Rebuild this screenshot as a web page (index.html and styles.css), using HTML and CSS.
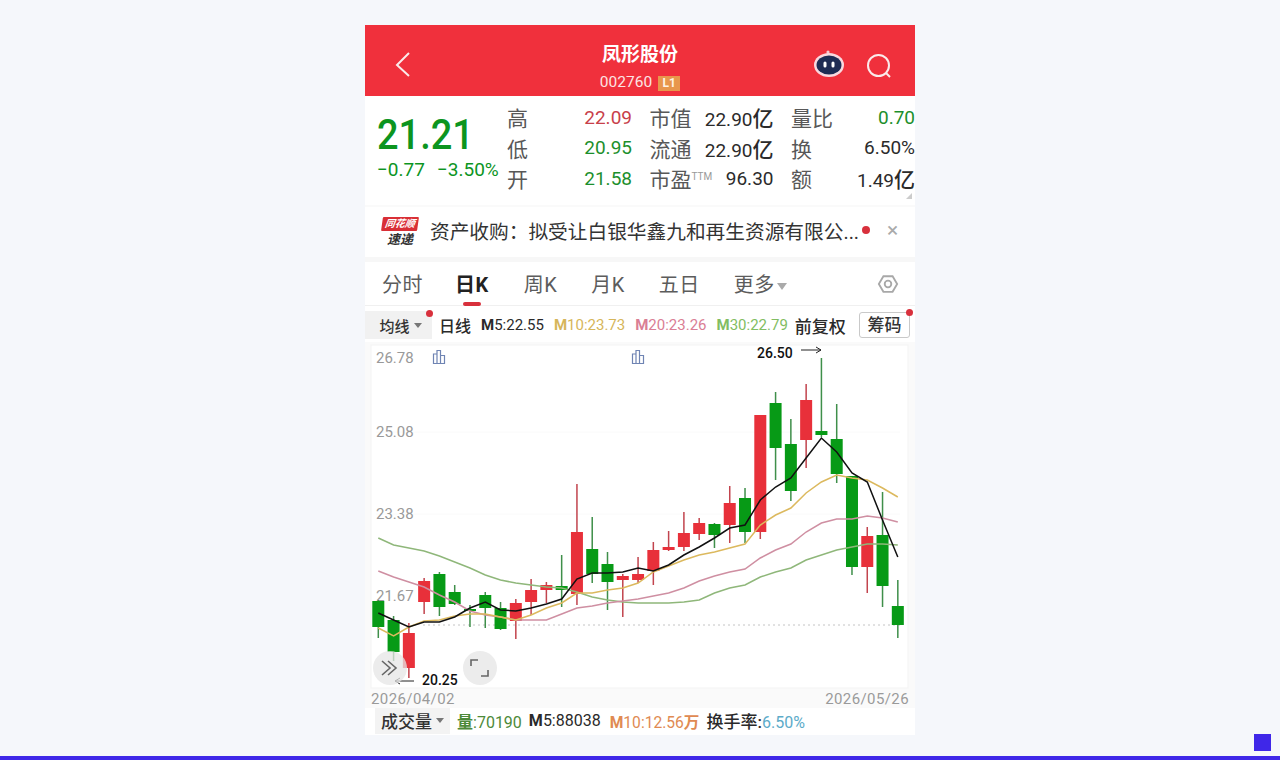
FILE: index.html
```html
<!DOCTYPE html>
<html lang="zh-CN">
<head>
    <meta charset="UTF-8">
    <title>凤形股份</title>
    <link rel="stylesheet" href="styles.css">
</head>
<body>
    <div class="page">
        <div class="phone">
            <div class="top-bar">
                <svg class="top-icon back-icon" viewBox="0 0 30 30"><path d="M21 3 L9 15 L21 26"/></svg>
                <div class="top-title">
                    <div class="stock-name">凤形股份</div>
                    <div class="stock-code">002760<span class="level">L1</span></div>
                </div>
                <div class="top-actions">
                    <svg class="robot-icon" viewBox="0 0 32 30">
                        <circle cx="15" cy="3" r="1.6" fill="#f6c9d2"/>
                        <path d="M15 3 V6" stroke="#f6c9d2" stroke-width="1.4"/>
                        <ellipse cx="16" cy="16" rx="15" ry="12" fill="#f9d9df"/>
                        <ellipse cx="16" cy="16" rx="12.5" ry="9.5" fill="#1e2c54"/>
                        <rect x="10.5" y="12.5" width="3" height="6" rx="1.5" fill="#fff"/>
                        <rect x="18.5" y="12.5" width="3" height="6" rx="1.5" fill="#fff"/>
                    </svg>
                    <svg class="top-icon search-icon" viewBox="0 0 30 30"><circle cx="14.5" cy="14.5" r="10.5"/><path d="M22 22 L26 26"/></svg>
                </div>
            </div>

            <div class="quote">
                <div class="quote-main">
                    <div class="last-price">21.21</div>
                    <div class="price-change"><span>−0.77</span><span>−3.50%</span></div>
                </div>
                <div class="quote-grid">
                    <div class="cell"><span class="label">高</span><span class="val up">22.09</span></div>
                    <div class="cell"><span class="label">市值</span><span class="val">22.90<b>亿</b></span></div>
                    <div class="cell"><span class="label">量比</span><span class="val down">0.70</span></div>
                    <div class="cell"><span class="label">低</span><span class="val down">20.95</span></div>
                    <div class="cell"><span class="label">流通</span><span class="val">22.90<b>亿</b></span></div>
                    <div class="cell"><span class="label">换</span><span class="val">6.50%</span></div>
                    <div class="cell"><span class="label">开</span><span class="val down">21.58</span></div>
                    <div class="cell"><span class="label">市盈<sup class="ttm">TTM</sup></span><span class="val">96.30</span></div>
                    <div class="cell"><span class="label">额</span><span class="val">1.49<b>亿</b></span></div>
                </div>
                <div class="corner-mark"></div>
            </div>

            <div class="news">
                <div class="news-logo">
                    <div class="news-logo-top">同花顺</div>
                    <div class="news-logo-bottom">速递</div>
                </div>
                <div class="news-text">资产收购：拟受让白银华鑫九和再生资源有限公...</div>
                <span class="news-dot"></span>
                <span class="news-close">×</span>
            </div>

            <div class="tabs">
                <span class="tab">分时</span>
                <span class="tab active">日K</span>
                <span class="tab">周K</span>
                <span class="tab">月K</span>
                <span class="tab">五日</span>
                <span class="tab">更多<i class="caret caret-big"></i></span>
                <svg class="gear" viewBox="0 0 24 24"><path d="M7 3.5 H17 L22 12 L17 20.5 H7 L2 12 Z"/><circle cx="12" cy="12" r="3.6"/></svg>
            </div>

            <div class="legend">
                <span class="legend-btn">均线<i class="caret"></i><em class="red-dot"></em></span>
                <span class="legend-item dark tall">日线</span>
                <span class="legend-item dark"><b>M</b>5:22.55</span>
                <span class="legend-item ma10"><b>M</b>10:23.73</span>
                <span class="legend-item ma20"><b>M</b>20:23.26</span>
                <span class="legend-item ma30"><b>M</b>30:22.79</span>
                <span class="legend-item dark tall">前复权</span>
                <span class="chip-btn">筹码<em class="red-dot"></em></span>
            </div>

            <svg id="chart" class="chart" viewBox="365 342 550 348">
                <rect x="371" y="345" width="537" height="343" fill="#fff" stroke="#f3f3f3"/>
                <path d="M376 432 H900 M376 514 H900" stroke="#fafafa"/>
                <text class="watermark" x="570" y="530">同花顺</text>
                <path d="M423 625 H903" stroke="#c4c4c4" stroke-dasharray="2 3"/>
                <text class="axis" x="376" y="363">26.78</text>
                <text class="axis" x="376" y="437">25.08</text>
                <text class="axis" x="376" y="519">23.38</text>
                <text class="axis" x="376" y="601">21.67</text>
                <path class="bar-mark" d="M433.5 363.5 V354 H437 V363.5 Z M437 363.5 V350.5 H440.5 V363.5 Z M440.5 363.5 V355.5 H444.5 V363.5 Z"/>
                <path class="bar-mark" d="M632.5 363.5 V354 H636 V363.5 Z M636 363.5 V350.5 H639.5 V363.5 Z M639.5 363.5 V355.5 H643.5 V363.5 Z"/>
                <g id="candles"></g>
                <g id="lines"></g>
                <text class="mark" x="757" y="358">26.50</text>
                <path class="arrow" d="M801 350 H821 M816 347 L821 350 L816 353"/>
                <text class="mark" x="422" y="685">20.25</text>
                <path class="arrow" d="M414 681 H395 M400 678 L395 681 L400 684"/>
                <circle cx="390" cy="668" r="17" fill="#e6e6e6" fill-opacity="0.75"/>
                <path class="chart-btn" d="M382 661 L390 668 L382 675 M388 661 L396 668 L388 675"/>
                <circle cx="480" cy="668" r="17" fill="#ececec"/>
                <path class="chart-btn" d="M471 666 V660 H478 M488 670 V676 H481"/>
            </svg>

            <div class="dates"><span>2026/04/02</span><span>2026/05/26</span></div>

            <div class="volume">
                <span class="volume-btn">成交量<i class="caret"></i></span>
                <span class="vol-green"><b>量</b>:70190</span>
                <span class="dark"><b>M</b>5:88038</span>
                <span class="vol-orange"><b>M</b>10:12.56<b>万</b></span>
                <span class="dark"><b class="turnover">换手率:</b><span class="vol-blue">6.50%</span></span>
            </div>
        </div>
        <div class="corner-square"></div>
        <div class="bottom-line"></div>
    </div>
    <script src="chart.js"></script>
</body>
</html>
```

FILE: styles.css
```css
* {
    box-sizing: border-box;
}
html, body {
    margin: 0;
    height: 100%;
}
body {
    font-family: Roboto, "Noto Sans CJK SC", sans-serif;
    background-color: #f5f7fb;
    overflow: hidden;
}
.page {
    position: relative;
    height: 760px;
    padding-top: 25px;
}
.phone {
    width: 550px;
    margin: 0 auto;
    background-color: #fff;
    display: flex;
    flex-direction: column;
}

/* top bar */
.top-bar {
    height: 71px;
    background-color: #f0303c;
    display: flex;
    align-items: center;
    justify-content: space-between;
    padding: 0 21px 0 23px;
    position: relative;
}
.top-icon {
    fill: none;
    stroke: #fbeaea;
    stroke-width: 2;
}
.back-icon {
    width: 30px;
    height: 30px;
    margin-top: 9px;
}
.top-title {
    position: absolute;
    left: 0;
    right: 0;
    top: 17px;
    text-align: center;
    color: #fff;
    pointer-events: none;
}
.stock-name {
    font-size: 19px;
    font-weight: 700;
    line-height: 26px;
}
.stock-code {
    font-size: 15.5px;
    line-height: 20px;
    margin-top: 4px;
    color: #fde3e3;
}
.level {
    display: inline-block;
    width: 22px;
    height: 15px;
    margin-left: 6px;
    background-color: #e8974c;
    color: #fff3e4;
    font-size: 12px;
    font-weight: 700;
    line-height: 15px;
    text-align: center;
    vertical-align: 0;
}
.top-actions {
    display: flex;
    align-items: center;
    gap: 19px;
    margin-top: 11px;
}
.robot-icon {
    width: 32px;
    height: 30px;
    margin-top: -5px;
}
.search-icon {
    width: 30px;
    height: 30px;
}

/* quote */
.quote {
    height: 109px;
    display: flex;
    position: relative;
}
.quote-main {
    width: 142px;
    padding: 17px 0 0 12px;
    color: #0c951f;
}
.last-price {
    font-size: 38px;
    font-weight: 500;
    line-height: 44px;
    transform: scaleY(1.1);
    transform-origin: left center;
}
.price-change {
    display: flex;
    gap: 12px;
    font-size: 19px;
    line-height: 22px;
    margin-top: 2px;
    white-space: nowrap;
}
.quote-grid {
    display: grid;
    grid-template-columns: 125px 124px 124px;
    grid-auto-rows: 30.5px;
    column-gap: 17.5px;
    padding-top: 6px;
}
.cell {
    display: flex;
    align-items: center;
    justify-content: space-between;
    white-space: nowrap;
}
.label {
    font-size: 21px;
    color: #585858;
}
.ttm {
    font-size: 10px;
    color: #999;
    vertical-align: 7px;
    line-height: 0;
}
.val {
    font-size: 19px;
    color: #2b2b2b;
}
.val b {
    font-size: 21px;
    font-weight: 500;
}
.up {
    color: #c8404a;
}
.down {
    color: #1c8f2c;
}
.corner-mark {
    position: absolute;
    right: 3px;
    bottom: 6px;
    width: 0;
    height: 0;
    border-left: 6px solid transparent;
    border-bottom: 6px solid #ccc;
}

/* news strip */
.news {
    height: 52px;
    display: flex;
    align-items: center;
    padding: 0 0 4px 17px;
    position: relative;
    border-top: 2px solid #fafafa;
}
.news-logo {
    width: 36px;
    text-align: center;
    margin-top: 4px;
}
.news-logo-top {
    background-color: #d92f36;
    color: #fff;
    font-size: 10px;
    font-weight: 700;
    font-style: italic;
    line-height: 14px;
    transform: skewX(-8deg);
    border-radius: 1px;
}
.news-logo-bottom {
    color: #333;
    font-size: 13px;
    font-weight: 700;
    font-style: italic;
    line-height: 17px;
}
.news-text {
    margin-left: 12px;
    font-size: 19.7px;
    color: #333;
    white-space: nowrap;
    width: 432px;
}
.news-dot {
    width: 8px;
    height: 8px;
    border-radius: 50%;
    background-color: #d8303c;
}
.news-close {
    margin-left: 17px;
    color: #aaa;
    font-size: 21px;
    line-height: 1;
}

/* tabs */
.tabs {
    height: 49px;
    border-top: 5px solid #f7f7f7;
    border-bottom: 1px solid #f0f0f0;
    display: flex;
    align-items: center;
    padding: 2px 0 0 17px;
    gap: 34px;
    position: relative;
}
.tab {
    font-size: 20px;
    letter-spacing: 0.5px;
    color: #5c5c5c;
    position: relative;
    line-height: 42px;
}
.tab.active {
    color: #222;
    font-weight: 700;
    margin: 0 1px 0 -2px;
}
.tab.active::after {
    content: "";
    position: absolute;
    left: 8px;
    right: 8px;
    bottom: 0;
    height: 4px;
    border-radius: 2px;
    background-color: #d8303c;
}
.caret {
    display: inline-block;
    width: 0;
    height: 0;
    border-left: 4px solid transparent;
    border-right: 4px solid transparent;
    border-top: 5px solid #777;
    margin-left: 4px;
    vertical-align: 2px;
}
.caret-big {
    border-left-width: 5px;
    border-right-width: 5px;
    border-top: 7px solid #aaa;
    margin-left: 2px;
}
.gear {
    position: absolute;
    right: 16px;
    top: 11px;
    width: 22px;
    height: 22px;
    fill: none;
    stroke: #a8a8a8;
    stroke-width: 2;
}

/* MA legend */
.legend {
    height: 36px;
    display: flex;
    align-items: center;
    font-size: 15px;
    white-space: nowrap;
    padding-bottom: 2px;
}
.legend-btn {
    width: 67px;
    height: 28px;
    margin-right: 7px;
    padding-left: 4px;
    background-color: #f1f1f1;
    color: #333;
    font-weight: 500;
    display: flex;
    align-items: center;
    justify-content: center;
    position: relative;
    margin-top: 4px;
}
.red-dot {
    position: absolute;
    right: -1px;
    top: -1px;
    width: 7px;
    height: 7px;
    border-radius: 50%;
    background-color: #d8303c;
}
.legend-item {
    margin-right: 10px;
    margin-top: 4px;
}
.legend-item.tall {
    font-size: 16px;
    font-weight: 500;
}
.legend-item:nth-child(6) {
    margin-right: 7px;
}
.legend-item:nth-child(7) {
    font-size: 17px;
}
.legend b {
    font-weight: 700;
}
.dark {
    color: #2a2a2a;
}
.ma10 {
    color: #d6b65a;
}
.ma20 {
    color: #da7e95;
}
.ma30 {
    color: #82bd62;
}
.chip-btn {
    width: 51px;
    height: 26px;
    margin-top: 4px;
    margin-left: auto;
    margin-right: 5px;
    border: 1px solid #c9c9c9;
    border-radius: 3px;
    color: #333;
    font-size: 17px;
    font-weight: 500;
    line-height: 24px;
    text-align: center;
    position: relative;
}
.chip-btn .red-dot {
    right: -4px;
    top: -4px;
}

/* chart */
.chart {
    display: block;
    width: 550px;
    height: 348px;
    background-color: #fafafa;
    font-family: Roboto, "Noto Sans CJK SC", sans-serif;
}
.watermark {
    font-size: 46px;
    font-weight: 700;
    fill: #000;
    fill-opacity: 0.025;
}
.axis {
    font-size: 15px;
    fill: #999;
}
.bar-mark {
    fill: #fff;
    stroke: #6f84b3;
    stroke-width: 1.2;
}
.mark {
    font-size: 14px;
    font-weight: 500;
    fill: #111;
}
.arrow {
    fill: none;
    stroke: #222;
    stroke-width: 1;
}
.chart-btn {
    fill: none;
    stroke: #666;
    stroke-width: 1.6;
}
.dates {
    height: 18px;
    padding: 0 6px;
    display: flex;
    justify-content: space-between;
    font-size: 15px;
    line-height: 18px;
    letter-spacing: 0.4px;
    color: #9a9a9a;
    background-color: #fafafa;
}
.volume {
    height: 27px;
    display: flex;
    align-items: center;
    gap: 7px;
    padding: 0 0 2px 10px;
    font-size: 16px;
    white-space: nowrap;
}
.volume b {
    font-weight: 700;
}
.volume b.turnover {
    font-size: 17px;
    font-weight: 500;
}
.volume-btn {
    width: 75px;
    height: 26px;
    background-color: #f3f3f3;
    color: #333;
    font-size: 17px;
    font-weight: 500;
    display: flex;
    align-items: center;
    justify-content: center;
}
.vol-green {
    color: #4d8a3a;
}
.vol-orange {
    color: #e08a52;
    font-size: 15.6px;
    margin-left: 2px;
}
.vol-blue {
    color: #5cabc9;
}
.corner-square {
    position: absolute;
    right: 9px;
    top: 734px;
    width: 17px;
    height: 17px;
    background-color: #3f27e8;
}
.bottom-line {
    position: absolute;
    left: 0;
    right: 0;
    bottom: 0;
    height: 4px;
    background-color: #3f27e8;
}
```

FILE: chart.js
```js
// open/close body top+bottom, wick top+bottom, in chart pixels
var candles = [
    ['g', 601, 627, 600, 638], ['g', 620, 652, 616, 661], ['r', 633, 668, 623, 678],
    ['r', 581, 602, 578, 614], ['g', 574, 607, 572, 616], ['g', 592, 604, 585, 605],
    ['g', 609, 611, 605, 627], ['g', 595, 608, 592, 628], ['g', 608, 629, 602, 630],
    ['r', 603, 621, 599, 639], ['r', 590, 602, 579, 615], ['r', 585, 590, 582, 603],
    ['g', 586, 590, 555, 607], ['r', 532, 594, 484, 605], ['g', 549, 574, 517, 583],
    ['g', 564, 582, 552, 610], ['r', 576, 580, 574, 617], ['r', 574, 580, 557, 583],
    ['r', 550, 571, 542, 585], ['r', 547, 550, 531, 551], ['r', 533, 547, 512, 551],
    ['r', 523, 534, 518, 540], ['g', 524, 535, 523, 548], ['r', 503, 525, 486, 543],
    ['g', 498, 532, 488, 543], ['r', 415, 532, 415, 539], ['g', 403, 448, 392, 480],
    ['g', 444, 491, 419, 501], ['r', 400, 440, 384, 468], ['g', 431, 435, 358, 437],
    ['g', 439, 474, 404, 483], ['g', 476, 567, 476, 575], ['r', 536, 567, 527, 593],
    ['g', 535, 586, 492, 607], ['g', 606, 625, 580, 638]
];

var lines = [
    { color: '#8fb77a', ys: [538, 545, 548, 551, 556, 562, 568, 575, 580, 583, 585, 587, 588, 592, 597, 600, 602, 603, 603, 603, 602, 600, 593, 588, 585, 577, 572, 568, 560, 555, 550, 547, 544, 544, 545] },
    { color: '#cf8fa2', ys: [571, 577, 582, 587, 595, 602, 611, 615, 617, 620, 620, 620, 614, 608, 606, 603, 601, 599, 596, 593, 588, 581, 576, 572, 569, 558, 550, 544, 532, 523, 519, 519, 516, 518, 522] },
    { color: '#dcb95e', ys: [628, 636, 627, 621, 620, 616, 614, 614, 617, 620, 615, 608, 603, 593, 593, 590, 588, 583, 572, 566, 560, 555, 552, 548, 544, 525, 515, 508, 493, 482, 475, 478, 480, 488, 497] },
    { color: '#111', ys: [613, 620, 627, 622, 622, 617, 608, 602, 610, 611, 608, 604, 599, 579, 573, 573, 572, 568, 571, 565, 555, 547, 538, 528, 525, 500, 487, 478, 458, 438, 452, 473, 482, 520, 557] }
];

var NS = 'http://www.w3.org/2000/svg';
var START = 378.3;
var STEP = 15.28;

function add(parent, tag, attrs) {
    var el = document.createElementNS(NS, tag);
    for (var k in attrs) {
        el.setAttribute(k, attrs[k]);
    }
    parent.appendChild(el);
}

var candleGroup = document.getElementById('candles');
candles.forEach(function(c, i) {
    var x = START + STEP * i;
    var body = c[0] === 'r' ? '#e8303a' : '#079a16';
    var wick = c[0] === 'r' ? '#c2444e' : '#3f8f4a';
    add(candleGroup, 'rect', { x: x - 0.75, y: c[3], width: 1.5, height: c[4] - c[3], fill: wick });
    add(candleGroup, 'rect', { x: x - 6, y: c[1], width: 12, height: c[2] - c[1], fill: body });
});

var lineGroup = document.getElementById('lines');
lines.forEach(function(line) {
    var pts = line.ys.map(function(y, i) {
        return (START + STEP * i).toFixed(1) + ',' + y;
    });
    add(lineGroup, 'polyline', { points: pts.join(' '), fill: 'none', stroke: line.color, 'stroke-width': 1.5 });
});
```
